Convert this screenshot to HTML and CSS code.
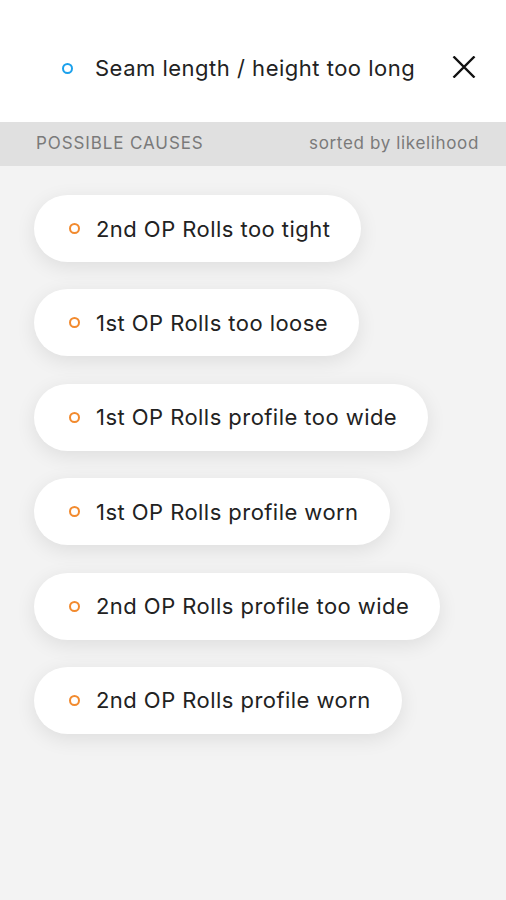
FILE: index.html
```html
<!DOCTYPE html>
<html>
<head>
<meta charset="utf-8">
<link rel="stylesheet" href="styles.css">
</head>
<body>
<div class="header">
  <span class="dot dot-blue"></span>
  <span class="title">Seam length / height too long</span>
  <svg class="close" width="24" height="22" viewBox="0 0 24 22"><path d="M1.5 0.5L22.5 21.5M22.5 0.5L1.5 21.5" stroke="#111" stroke-width="2.4" fill="none"/></svg>
</div>
<div class="bar">
  <span class="label">POSSIBLE CAUSES</span>
  <span class="sorted">sorted by likelihood</span>
</div>
<div class="list">
  <div class="pill"><span class="dot dot-orange"></span><span>2nd OP Rolls too tight</span></div>
  <div class="pill"><span class="dot dot-orange"></span><span>1st OP Rolls too loose</span></div>
  <div class="pill"><span class="dot dot-orange"></span><span>1st OP Rolls profile too wide</span></div>
  <div class="pill"><span class="dot dot-orange"></span><span>1st OP Rolls profile worn</span></div>
  <div class="pill"><span class="dot dot-orange"></span><span>2nd OP Rolls profile too wide</span></div>
  <div class="pill"><span class="dot dot-orange"></span><span>2nd OP Rolls profile worn</span></div>
</div>
</body>
</html>
```
FILE: styles.css
```css
html, body { margin: 0; padding: 0; }
body {
  width: 506px;
  height: 900px;
  background: #f3f3f3;
  font-family: Inter, "Noto Sans", sans-serif;
  color: #222;
  overflow: hidden;
}
.header {
  height: 122px;
  background: #fff;
  display: flex;
  align-items: center;
  padding: 14px 30px 0 62px;
  box-sizing: border-box;
}
.title {
  font-size: 22px;
  margin-left: 22px;
  flex: 1;
  color: #222;
  letter-spacing: 0.5px;
}
.close { display: block; margin-top: -3px; }
.dot {
  display: inline-block;
  width: 11px;
  height: 11px;
  border-radius: 50%;
  box-sizing: border-box;
  flex: none;
}
.dot-blue { border: 2.5px solid #1ba1ec; }
.dot-orange { border: 2.5px solid #f28a2e; }
.bar {
  height: 44px;
  background: #e0e0e0;
  display: flex;
  align-items: center;
  justify-content: space-between;
  padding: 0 27px 2px 36px;
  box-sizing: border-box;
  font-size: 17px;
  color: #7a7a7a;
}
.label { letter-spacing: 0.9px; }
.sorted { letter-spacing: 0.65px; }
.list {
  display: flex;
  flex-direction: column;
  align-items: flex-start;
  gap: 27.4px;
  padding: 29px 0 0 34px;
}
.pill {
  height: 67px;
  border-radius: 34px;
  background: #fff;
  display: flex;
  align-items: center;
  padding: 0 31px 0 35px;
  box-shadow: 0 5px 20px rgba(0,0,0,0.09);
  font-size: 22px;
  letter-spacing: 0.45px;
  color: #222;
}
.pill .dot { margin-right: 16px; }
```
